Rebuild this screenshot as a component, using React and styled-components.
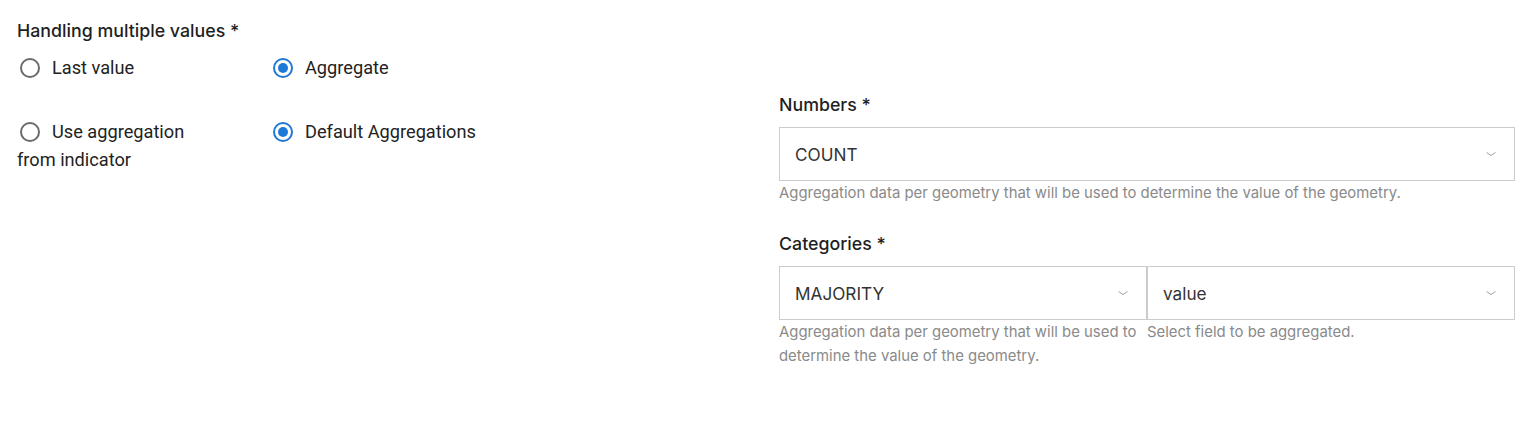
import styled, { createGlobalStyle } from "styled-components"

const GlobalStyle = createGlobalStyle`
  body {
    margin: 0;
    background: #ffffff;
    font-family: Inter, "Noto Sans", sans-serif;
  }
`

function RadioIcon({ checked }) {
  return (
    <RadioSvg viewBox="0 0 24 24" checked={checked}>
      <circle cx="12" cy="12" r="9" fill="none" strokeWidth="2" />
      {checked && <circle cx="12" cy="12" r="5" className="dot" />}
    </RadioSvg>
  )
}

function Chevron() {
  return (
    <ChevronSvg viewBox="0 0 12 8">
      <path d="M1.5 2.5 L6 5.5 L10.5 2.5" fill="none" strokeWidth="1" />
    </ChevronSvg>
  )
}

function Select({ value }) {
  return (
    <SelectBox>
      <SelectValue>{value}</SelectValue>
      <Chevron />
    </SelectBox>
  )
}

function App() {
  return (
    <>
      <GlobalStyle />
      <Page>
        <LeftColumn>
          <Heading>Handling multiple values *</Heading>
          <RadioGrid>
            <RadioOption>
              <RadioIcon />
              Last value
            </RadioOption>
            <RadioOption>
              <RadioIcon checked />
              Aggregate
            </RadioOption>
            <RadioOption narrow>
              <RadioIcon />
              Use aggregation from indicator
            </RadioOption>
            <RadioOption>
              <RadioIcon checked />
              Default Aggregations
            </RadioOption>
          </RadioGrid>
        </LeftColumn>
        <RightColumn>
          <Field>
            <FieldLabel>Numbers *</FieldLabel>
            <Select value="COUNT" />
            <Helper>Aggregation data per geometry that will be used to determine the value of the geometry.</Helper>
          </Field>
          <Field>
            <FieldLabel>Categories *</FieldLabel>
            <SplitRow>
              <div>
                <Select value="MAJORITY" />
                <Helper>Aggregation data per geometry that will be used to determine the value of the geometry.</Helper>
              </div>
              <div>
                <Select value="value" />
                <Helper>Select field to be aggregated.</Helper>
              </div>
            </SplitRow>
          </Field>
        </RightColumn>
      </Page>
    </>
  )
}

export default App

const Page = styled.div`
  display: grid;
  grid-template-columns: 1fr 736px;
  column-gap: 26px;
  padding: 19px 19px 0 17px;
  width: 1534px;
  box-sizing: border-box;
`

const LeftColumn = styled.div``

const Heading = styled.div`
  font-family: Inter, sans-serif;
  font-weight: 500;
  font-size: 17.8px;
  line-height: 24px;
  color: #1f1f1f;
`

const RadioGrid = styled.div`
  display: grid;
  grid-template-columns: 253px 253px;
  row-gap: 36px;
  margin-top: 11px;
`

const RadioOption = styled.label`
  display: block;
  font-family: Roboto, "Liberation Sans", sans-serif;
  font-size: 18.2px;
  line-height: 28px;
  color: #222222;
  max-width: ${(p) => (p.narrow ? "200px" : "none")};
`

const RadioSvg = styled.svg`
  width: 24px;
  height: 24px;
  vertical-align: -6px;
  margin: 0 10px 0 1px;
  stroke: ${(p) => (p.checked ? "#1e78d6" : "#6b6b6b")};
  .dot {
    fill: #1e78d6;
    stroke: none;
  }
`

const RightColumn = styled.div`
  margin-top: 74px;
  display: flex;
  flex-direction: column;
  gap: 27px;
`

const Field = styled.div``

const FieldLabel = styled.div`
  font-family: Inter, sans-serif;
  font-weight: 500;
  font-size: 17.8px;
  line-height: 24px;
  color: #1f1f1f;
  margin-bottom: 10px;
`

const SplitRow = styled.div`
  display: grid;
  grid-template-columns: 1fr 1fr;
`

const SelectBox = styled.div`
  display: flex;
  align-items: center;
  justify-content: space-between;
  height: 54px;
  box-sizing: border-box;
  border: 1px solid #cccccc;
  padding: 0 17px 0 15px;
`

const SelectValue = styled.span`
  font-family: Inter, sans-serif;
  font-size: 17.2px;
  color: #333333;
`

const ChevronSvg = styled.svg`
  width: 12px;
  height: 8px;
  stroke: #a0a0a0;
`

const Helper = styled.div`
  font-family: Inter, sans-serif;
  font-size: 14.9px;
  line-height: 24px;
  color: #8a8a8a;
`
